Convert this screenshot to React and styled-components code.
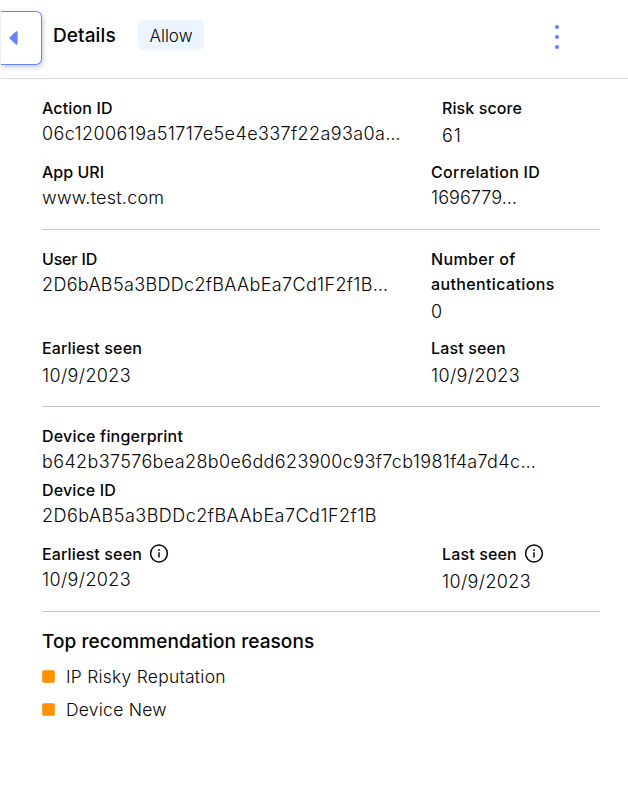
import React from "react";
import styled, { createGlobalStyle } from "styled-components";

const GlobalStyle = createGlobalStyle`
  * { box-sizing: border-box; }
  body { margin: 0; background: #fff; color: #050505; font-family: Inter, "Open Sans", sans-serif; }
`;

const Page = styled.main`
  min-height: 810px;
  width: 628px;
  overflow: hidden;
`;

const Header = styled.header`
  height: 79px;
  border-bottom: 1px solid #dcdde6;
  display: flex;
  align-items: flex-start;
  padding-left: 1px;
`;

const CollapseButton = styled.button`
  width: 41px;
  height: 54px;
  margin-top: 11px;
  padding: 0 0 0 8px;
  display: flex;
  align-items: center;
  background: #fff;
  border: 1px solid #6683fd;
  border-left: 0;
  border-radius: 0 6px 6px 0;
  box-shadow: 1px 2px 5px rgba(40, 45, 70, 0.25);
`;

const Title = styled.h1`
  margin: 23px 0 0 11px;
  width: 85px;
  font-size: 19px;
  font-weight: 500;
  line-height: 26px;
  letter-spacing: 0.1px;
  white-space: nowrap;
`;

const Badge = styled.span`
  margin-top: 20px;
  width: 66px;
  height: 30px;
  border-radius: 5px;
  background: #eaf5ff;
  text-align: center;
  font-size: 17px;
  font-weight: 300;
  line-height: 32px;
`;

const MenuButton = styled.button`
  margin: 23px 64px 0 auto;
  padding: 0;
  width: 14px;
  height: 28px;
  border: 0;
  background: none;
  display: flex;
  justify-content: center;
`;

const Section = styled.section`
  margin: 0 28px 0 42px;
  padding: 17px 0 ${(p) => p.$bottom}px;
  border-bottom: 1px solid #c6c6c6;
  display: flex;
  flex-direction: column;
`;

const Row = styled.div`
  display: grid;
  grid-template-columns: ${(p) => (p.$wide ? 400 : 389)}px 1fr;
  margin-top: ${(p) => p.$top || 0}px;
`;

const Block = styled.div`
  display: flex;
  flex-direction: column;
  gap: ${(p) => (p.$loose ? 2 : 0)}px;
  margin-top: ${(p) => p.$top || 0}px;
`;

const Label = styled.div`
  display: flex;
  align-items: center;
  gap: 7px;
  font-size: 16px;
  font-weight: 500;
  line-height: 25px;
  letter-spacing: ${(p) => p.$track}px;
  max-width: 160px;
`;

const Value = styled.div`
  font-size: 18px;
  font-weight: 300;
  line-height: 26px;
  letter-spacing: ${(p) => p.$track}px;
  white-space: nowrap;
`;

const Reasons = styled.section`
  padding: 17px 42px 0;
`;

const ReasonsTitle = styled.h2`
  margin: 0;
  font-size: 19px;
  font-weight: 500;
  line-height: 26px;
  letter-spacing: 0.07px;
`;

const ReasonList = styled.ul`
  margin: 5px 0 0;
  padding: 0;
  list-style: none;
`;

const Reason = styled.li`
  display: flex;
  align-items: center;
  gap: 11px;
  height: 33px;
  font-size: 17.5px;
  font-weight: 300;
  letter-spacing: 0.23px;
`;

const Marker = styled.span`
  width: 13px;
  height: 13px;
  border-radius: 2px;
  border: 1px solid #ffa62e;
  background: #ff9100;
`;

const InfoGlyph = styled.svg`
  margin-bottom: 2px;
`;

function InfoIcon() {
  return (
    <InfoGlyph width="20" height="20" viewBox="0 0 20 20" fill="none" stroke="#0a0a0a">
      <circle cx="10" cy="9.5" r="8.4" strokeWidth="1.5" />
      <path d="M10 8.2v5.3" strokeWidth="1.5" />
      <circle cx="10" cy="6" r="0.9" fill="#0a0a0a" stroke="none" />
    </InfoGlyph>
  );
}

function Field({ label, labelTrack = 0.15, value, track = 0.37, info, loose, top }) {
  return (
    <Block $loose={loose} $top={top}>
      <Label $track={labelTrack}>
        <span>{label}</span>
        {info && <InfoIcon />}
      </Label>
      <Value $track={track}>{value}</Value>
    </Block>
  );
}

export default function App() {
  return (
    <Page>
      <GlobalStyle />
      <Header>
        <CollapseButton aria-label="Collapse">
          <svg width="10" height="14" viewBox="0 0 10 14">
            <path d="M.8 6.2 6.8.6Q8.6-.4 8.6 1.5v11Q8.6 14.4 6.8 13.4L.8 7.8Q0 7 .8 6.2Z" fill="#6683fd" />
          </svg>
        </CollapseButton>
        <Title>Details</Title>
        <Badge>Allow</Badge>
        <MenuButton aria-label="More actions">
          <svg width="6" height="28" viewBox="0 0 6 28" fill="#6683fd">
            <circle cx="3" cy="4" r="2.1" />
            <circle cx="3" cy="14" r="2.1" />
            <circle cx="3" cy="24" r="2.1" />
          </svg>
        </MenuButton>
      </Header>

      <Section $bottom={18}>
        <Row $wide>
          <Field label="Action ID" value="06c1200619a51717e5e4e337f22a93a0a…" track={0.39} />
          <Field label="Risk score" labelTrack={0.1} value="61" track={1} loose />
        </Row>
        <Row $top={11}>
          <Field label="App URI" labelTrack={0.01} value="www.test.com" track={0.22} />
          <Field label="Correlation ID" labelTrack={0.28} value="1696779…" track={0.06} />
        </Row>
      </Section>

      <Section $bottom={17}>
        <Row>
          <Field label="User ID" labelTrack={-0.17} value="2D6bAB5a3BDDc2fBAAbEa7Cd1F2f1B…" track={0.34} />
          <Field label="Number of authentications" labelTrack={0.37} value="0" loose />
        </Row>
        <Row $top={11}>
          <Field label="Earliest seen" value="10/9/2023" loose />
          <Field label="Last seen" value="10/9/2023" loose />
        </Row>
      </Section>

      <Section $bottom={16}>
        <Field label="Device fingerprint" labelTrack={0.19} value="b642b37576bea28b0e6dd623900c93f7cb1981f4a7d4c…" track={0.36} />
        <Field label="Device ID" value="2D6bAB5a3BDDc2fBAAbEa7Cd1F2f1B" track={0.48} top={3} />
        <Row $wide $top={13}>
          <Field label="Earliest seen" value="10/9/2023" info />
          <Field label="Last seen" value="10/9/2023" info loose />
        </Row>
      </Section>

      <Reasons>
        <ReasonsTitle>Top recommendation reasons</ReasonsTitle>
        <ReasonList>
          <Reason><Marker />IP Risky Reputation</Reason>
          <Reason><Marker />Device New</Reason>
        </ReasonList>
      </Reasons>
    </Page>
  );
}
